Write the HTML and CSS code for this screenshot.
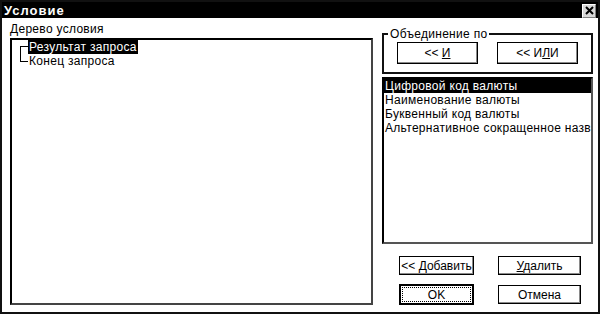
FILE: index.html
```html
<!DOCTYPE html>
<html lang="ru">
<head>
    <meta charset="UTF-8">
    <title>Условие</title>
    <link rel="stylesheet" href="styles.css">
</head>
<body>
    <div class="window">
        <div class="titlebar">
            <span class="title">Условие</span>
            <button class="close-btn" aria-label="Закрыть">
                <svg viewBox="0 0 9 9" width="9" height="9">
                    <path d="M1 1L8 8M8 1L1 8" stroke="#000" stroke-width="2"></path>
                </svg>
            </button>
        </div>

        <div class="content">
            <div class="left">
                <div class="label">Дерево условия</div>
                <div class="tree">
                    <div class="node first">
                        <span class="branch"></span>
                        <span class="node-text selected">Результат запроса</span>
                    </div>
                    <div class="node last">
                        <span class="branch"></span>
                        <span class="node-text">Конец запроса</span>
                    </div>
                </div>
            </div>

            <div class="right">
                <fieldset class="group">
                    <legend>Объединение по</legend>
                    <div class="group-buttons">
                        <button class="btn">&lt;&lt; <u>И</u></button>
                        <button class="btn">&lt;&lt; И<u>Л</u>И</button>
                    </div>
                </fieldset>

                <div class="listbox">
                    <div class="list-item selected">Цифровой код валюты</div>
                    <div class="list-item">Наименование валюты</div>
                    <div class="list-item">Буквенный код валюты</div>
                    <div class="list-item">Альтернативное сокращенное название валюты</div>
                </div>

                <div class="actions">
                    <button class="btn">&lt;&lt; <u>Д</u>обавить</button>
                    <button class="btn"><u>У</u>далить</button>
                    <button class="btn default">OK</button>
                    <button class="btn">Отмена</button>
                </div>
            </div>
        </div>
    </div>
</body>
</html>
```

FILE: styles.css
```css
* {
    margin: 0;
    padding: 0;
    box-sizing: border-box;
    font-family: "Liberation Sans", Arial, sans-serif;
}

body {
    background: #fff;
    width: 600px;
    height: 316px;
    overflow: hidden;
}

.window {
    width: 600px;
    height: 314px;
    border: 2px solid #111;
    background: #fff;
    display: flex;
    flex-direction: column;
}

.titlebar {
    height: 16px;
    background: #000;
    display: flex;
    align-items: center;
    justify-content: space-between;
    padding: 0 2px 0 2px;
}

.title {
    color: #fff;
    font-weight: bold;
    font-size: 13px;
    letter-spacing: 1px;
    margin-top: 1px;
}

.close-btn {
    width: 14px;
    height: 14px;
    margin-top: 1px;
    background: #d8d8d8;
    border: 1px solid #fff;
    border-right-color: #808080;
    border-bottom-color: #808080;
    display: flex;
    align-items: center;
    justify-content: center;
}

.content {
    flex: 1;
    display: flex;
    gap: 9px;
    padding: 4px 4px 8px 8px;
    font-size: 12px;
    letter-spacing: 0.3px;
    color: #000;
}

.left {
    width: 363px;
    display: flex;
    flex-direction: column;
}

.label {
    line-height: 14px;
    margin-bottom: 2px;
}

.tree {
    flex: 1;
    border: 2px solid #000;
    border-right-color: #444;
    border-bottom-color: #444;
    padding-left: 8px;
}

.node {
    display: flex;
    height: 14px;
    line-height: 14px;
}

.branch {
    width: 8px;
    height: 8px;
    border-left: 1px solid #000;
}

.node.first .branch {
    align-self: flex-end;
    border-top: 1px solid #000;
}

.node.last .branch {
    align-self: flex-start;
    border-bottom: 1px solid #000;
}

.node-text {
    padding: 0 1px;
}

.selected {
    background: #000;
    color: #fff;
}

.right {
    width: 211px;
    display: flex;
    flex-direction: column;
}

.group {
    margin-top: 5px;
    border: 2px solid #111;
    padding: 1px 13px 8px 13px;
}

.group legend {
    margin-left: -9px;
    padding: 0 2px;
    line-height: 14px;
}

.group-buttons {
    display: flex;
    justify-content: space-between;
}

.group-buttons .btn {
    width: 81px;
    height: 22px;
}

.btn {
    background: #fff;
    border: 1px solid #000;
    box-shadow: inset -1px -1px #8a8a8a;
    font-size: 12px;
    letter-spacing: 0;
    color: #000;
    text-align: center;
    white-space: nowrap;
}

.listbox {
    margin-top: 3px;
    height: 167px;
    border: 2px solid #000;
    border-right-color: #555;
    border-bottom-color: #555;
    overflow: hidden;
}

.list-item {
    height: 14px;
    line-height: 14px;
    padding-left: 1px;
    white-space: nowrap;
}

.actions {
    margin: 11px 0 0 17px;
    display: grid;
    grid-template-columns: 75px 83px;
    grid-template-rows: 21px 21px;
    column-gap: 24px;
    row-gap: 8px;
    align-items: center;
}

.actions .btn {
    height: 19px;
}

.actions .btn.default {
    height: 21px;
    border: 2px solid #000;
    outline: 1px dotted #000;
    outline-offset: -4px;
    box-shadow: none;
}
```
